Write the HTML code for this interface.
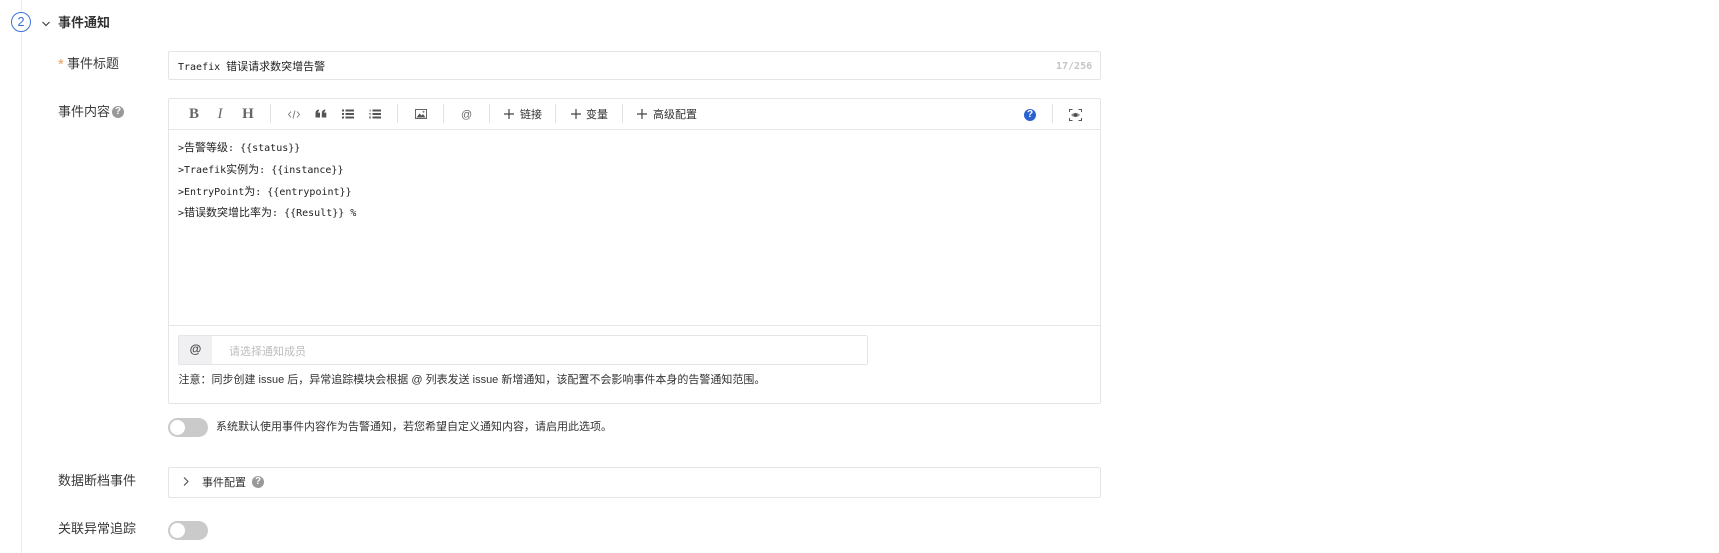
<!DOCTYPE html>
<html lang="zh">
<head>
<meta charset="utf-8">
<style>
html,body{margin:0;padding:0;background:#fff;}
body{width:1719px;height:553px;position:relative;overflow:hidden;font-family:"Liberation Sans","Noto Sans CJK SC",sans-serif;color:#333;}
.a{position:absolute;white-space:nowrap;}
.box{position:absolute;box-sizing:border-box;border:1px solid #e5e5e8;border-radius:2px;background:#fff;}
.lab{position:absolute;left:58px;font-size:13px;line-height:18px;color:#3a3a3a;white-space:nowrap;}
.mono{font-family:"DejaVu Sans Mono","Noto Sans CJK SC",monospace;font-size:10px;line-height:14px;color:#222;white-space:pre;position:absolute;}
.mono b{font-family:"Noto Sans CJK SC",sans-serif;font-size:11px;font-weight:normal;}
.sep{position:absolute;top:104px;width:1px;height:19px;background:#e2e2e6;}
.tb{position:absolute;font-size:11px;line-height:14px;top:108px;color:#333;white-space:nowrap;}
.plus{position:absolute;top:109px;width:10px;height:10px;}
.sf{position:absolute;top:105px;font-family:"Liberation Serif",serif;font-size:15px;line-height:18px;color:#666;font-weight:bold;width:20px;text-align:center;}
.tog{position:absolute;left:168px;width:40px;height:19px;border-radius:10px;background:#cacaca;}
.tog i{position:absolute;left:2px;top:2px;width:15px;height:15px;border-radius:50%;background:#fff;}
.q{position:absolute;width:12px;height:12px;border-radius:50%;background:#999;color:#fff;font-size:10px;line-height:12px;font-weight:bold;text-align:center;}
svg{position:absolute;overflow:visible;}
</style>
</head>
<body>
<div class="a" style="left:21px;top:0;width:1px;height:553px;background:#ebebeb;"></div>
<div class="a" style="left:11px;top:12px;width:20px;height:20px;box-sizing:border-box;border:1px solid #3d74d6;border-radius:50%;background:#fff;color:#3d74d6;font-size:13px;line-height:18px;text-align:center;">2</div>
<svg style="left:42px;top:21px;" width="8" height="6"><path d="M0.5 1 L4 4.5 L7.5 1" fill="none" stroke="#444" stroke-width="1.2"/></svg>
<div class="a" style="left:58px;top:14px;font-size:13px;line-height:18px;font-weight:bold;color:#333;">事件通知</div>

<div class="a" style="left:58px;top:56px;font-size:15px;line-height:18px;color:#e8a060;">*</div>
<div class="a" style="left:67px;top:55px;font-size:13px;line-height:18px;color:#3a3a3a;">事件标题</div>
<div class="box" style="left:168px;top:51px;width:933px;height:29px;"></div>
<div class="mono" style="left:178px;top:59px;">Traefix <b>错误请求数突增告警</b></div>
<div class="mono" style="left:1056px;top:60px;color:#c4c4c4;font-weight:bold;">17/256</div>

<div class="lab" style="top:103px;">事件内容</div>
<div class="q" style="left:112px;top:106px;">?</div>

<div class="box" style="left:168px;top:98px;width:933px;height:306px;"></div>
<div class="a" style="left:169px;top:129px;width:931px;height:1px;background:#e6e6ea;"></div>
<div class="a" style="left:169px;top:325px;width:931px;height:1px;background:#e6e6ea;"></div>

<div class="sf" style="left:184px;">B</div>
<div class="sf" style="left:210px;font-style:italic;font-weight:normal;">I</div>
<div class="sf" style="left:238px;">H</div>
<div class="sep" style="left:270px;"></div>
<svg style="left:288px;top:110px;" width="12" height="9"><path d="M3 1.5 L0.5 4.5 L3 7.5 M9 1.5 L11.5 4.5 L9 7.5 M7 0.5 L5 8.5" fill="none" stroke="#777" stroke-width="0.9"/></svg>
<svg style="left:315px;top:109px;" width="12" height="10"><path d="M0.5 4 Q0.5 1 4 0.5 L4 2 Q2.8 2.4 2.8 3.6 L5 3.6 L5 8.5 L0.5 8.5 Z M6.8 4 Q6.8 1 10.3 0.5 L10.3 2 Q9.1 2.4 9.1 3.6 L11.3 3.6 L11.3 8.5 L6.8 8.5 Z" fill="#555"/></svg>
<svg style="left:342px;top:109px;" width="12" height="10"><path d="M0 0.5h2v2h-2z M0 4h2v2h-2z M0 7.5h2v2h-2z M3.5 0.5h8.5v2h-8.5z M3.5 4h8.5v2h-8.5z M3.5 7.5h8.5v2h-8.5z" fill="#555"/></svg>
<svg style="left:369px;top:109px;" width="12" height="10"><path d="M0.5 0.5h1.2v2h-1.2z M0 4h2v1h-2z M0.5 5.5h1.5v.8h-1.5z M0 7.5h2v2h-2z" fill="#888"/><path d="M3.5 0.5h8.5v2h-8.5z M3.5 4h8.5v2h-8.5z M3.5 7.5h8.5v2h-8.5z" fill="#555"/></svg>
<div class="sep" style="left:397px;"></div>
<svg style="left:415px;top:109px;" width="12" height="10"><rect x="0.5" y="0.5" width="11" height="9" fill="#fff" stroke="#666"/><path d="M1.5 8.5 L4.5 4.5 L6.5 6.5 L8 5 L10.5 8.5 Z" fill="#555"/><circle cx="8.5" cy="2.8" r="1" fill="#777"/></svg>
<div class="sep" style="left:443px;"></div>
<div class="tb" style="left:461px;color:#666;">@</div>
<div class="sep" style="left:489px;"></div>
<svg class="plus" style="left:504px;"><path d="M5 0V10M0 5H10" stroke="#444" stroke-width="1.2"/></svg>
<div class="tb" style="left:520px;">链接</div>
<div class="sep" style="left:555px;"></div>
<svg class="plus" style="left:571px;"><path d="M5 0V10M0 5H10" stroke="#444" stroke-width="1.2"/></svg>
<div class="tb" style="left:586px;">变量</div>
<div class="sep" style="left:622px;"></div>
<svg class="plus" style="left:637px;"><path d="M5 0V10M0 5H10" stroke="#444" stroke-width="1.2"/></svg>
<div class="tb" style="left:653px;">高级配置</div>
<div class="q" style="left:1024px;top:109px;background:#2a62cf;">?</div>
<div class="sep" style="left:1052px;"></div>
<svg style="left:1069px;top:109px;" width="13" height="12"><path d="M0.5 3V0.5H3.5 M9.5 0.5H12.5V3 M12.5 9V11.5H9.5 M3.5 11.5H0.5V9" fill="none" stroke="#555" stroke-width="1"/><path d="M2 6 Q6.5 1.8 11 6 Q6.5 10.2 2 6Z" fill="#888"/><circle cx="6.5" cy="6" r="1.5" fill="#444"/></svg>

<div class="mono" style="left:178px;top:140px;">&gt;<b>告警等级</b>: {{status}}</div>
<div class="mono" style="left:178px;top:162px;">&gt;Traefik<b>实例为</b>: {{instance}}</div>
<div class="mono" style="left:178px;top:184px;">&gt;EntryPoint<b>为</b>: {{entrypoint}}</div>
<div class="mono" style="left:178px;top:205px;">&gt;<b>错误数突增比率为</b>: {{Result}} %</div>

<div class="box" style="left:178px;top:335px;width:690px;height:30px;"></div>
<div class="a" style="left:179px;top:336px;width:33px;height:28px;background:#f0f0f2;text-align:center;font-size:12px;font-weight:bold;line-height:26px;color:#444;">@</div>
<div class="a" style="left:229px;top:345px;font-size:11px;line-height:14px;color:#bdbdbd;">请选择通知成员</div>
<div class="a" style="left:178.5px;top:372px;font-size:11px;line-height:16px;color:#333;">注意：同步创建 issue 后，异常追踪模块会根据 @ 列表发送 issue 新增通知，该配置不会影响事件本身的告警通知范围。</div>

<div class="tog" style="top:418px;"><i></i></div>
<div class="a" style="left:216px;top:419px;font-size:11px;line-height:16px;color:#333;">系统默认使用事件内容作为告警通知，若您希望自定义通知内容，请启用此选项。</div>

<div class="lab" style="top:472px;">数据断档事件</div>
<div class="box" style="left:168px;top:467px;width:933px;height:31px;"></div>
<svg style="left:183px;top:477px;" width="6" height="9"><path d="M1 0.5 L5 4.5 L1 8.5" fill="none" stroke="#444" stroke-width="1"/></svg>
<div class="a" style="left:202px;top:475px;font-size:11px;line-height:16px;color:#333;">事件配置</div>
<div class="q" style="left:252px;top:476px;">?</div>

<div class="lab" style="top:520px;">关联异常追踪</div>
<div class="tog" style="top:521px;"><i></i></div>
</body>
</html>
